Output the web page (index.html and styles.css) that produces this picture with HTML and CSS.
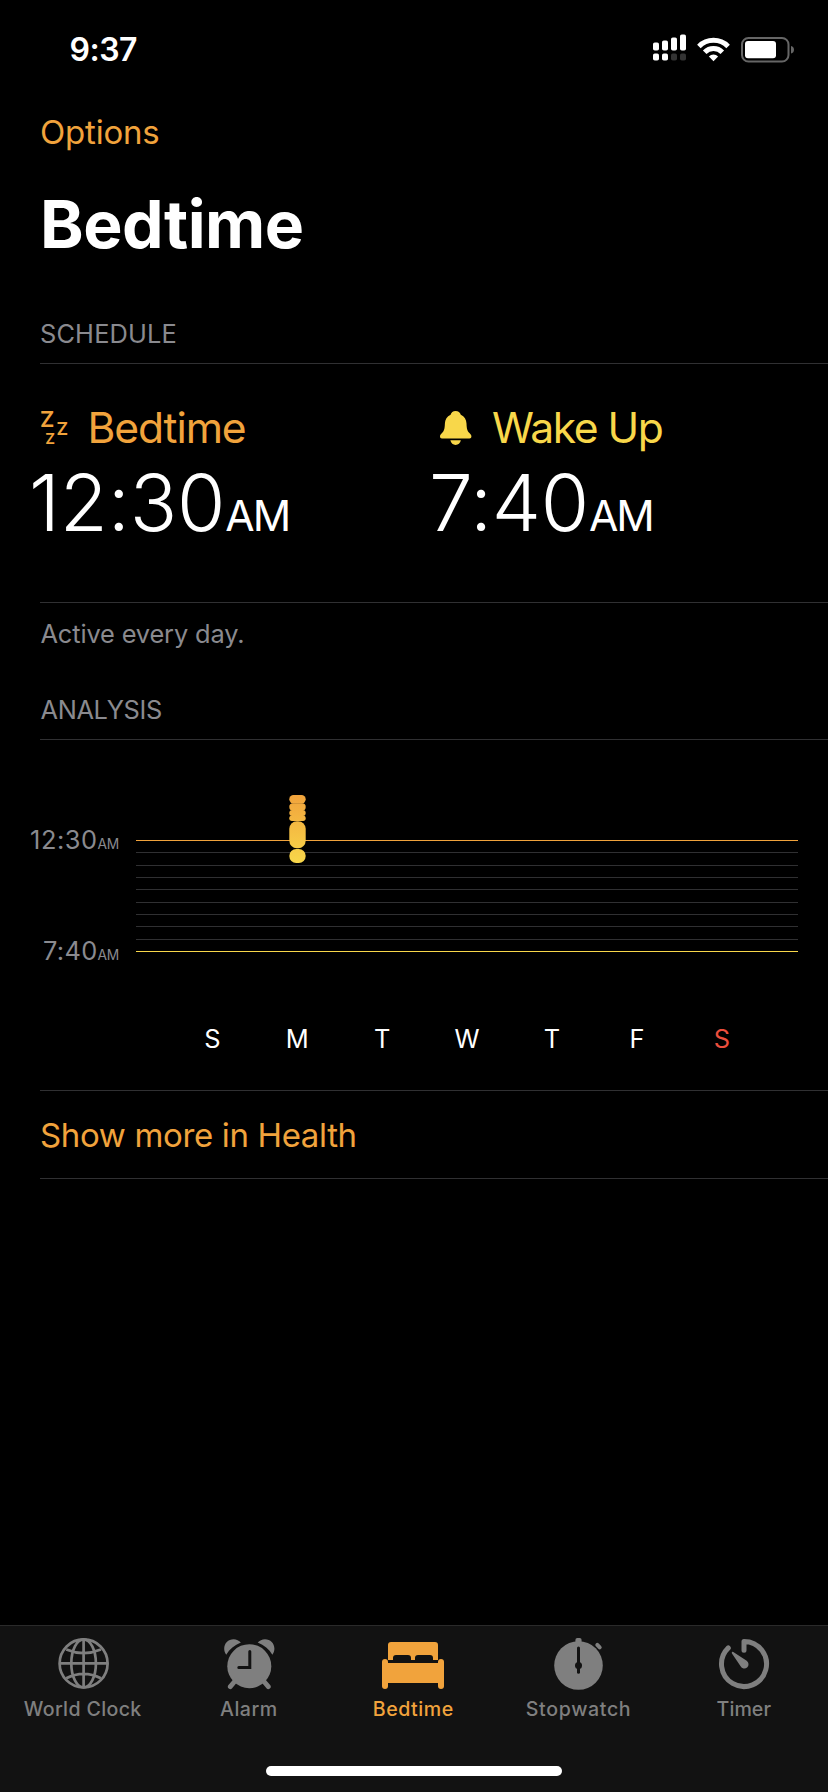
FILE: index.html
```
<!DOCTYPE html>
<html lang="en">
<head>
<meta charset="utf-8">
<title>Bedtime</title>
<link rel="stylesheet" href="styles.css">
</head>
<body>
<header class="status">
  <span class="status-time">9:37</span>
  <span class="status-icons">
    <svg class="signal" width="34" height="27" viewBox="0 0 34 27" fill="#fff">
      <rect x="0" y="8.5" width="6" height="8" rx="1.8"/><rect x="9" y="6.5" width="6" height="10" rx="1.8"/><rect x="18" y="3.5" width="6" height="13" rx="1.8"/><rect x="27" y="0.5" width="6" height="16" rx="1.8"/>
      <rect x="0" y="19.5" width="6" height="7" rx="1.8"/><rect x="9" y="19.5" width="6" height="7" rx="1.8"/>
      <g fill="#333"><rect x="18" y="19.5" width="6" height="7" rx="1.8"/><rect x="27" y="19.5" width="6" height="7" rx="1.8"/></g>
    </svg>
    <svg class="wifi" width="33" height="25" viewBox="0 0 33 25">
      <g fill="none" stroke="#fff" stroke-width="5"><path d="M1.9 9.4A20.6 20.6 0 0 1 31.1 9.4"/><path d="M7.7 15.2A12.4 12.4 0 0 1 25.3 15.2"/></g>
      <path fill="#fff" d="M11.9 19.4A6.6 6.6 0 0 1 21.1 19.4L16.5 24.2Z"/>
    </svg>
    <svg class="battery" width="53" height="26" viewBox="0 0 53 26">
      <rect x="1" y="1" width="46.5" height="23.5" rx="6.5" fill="none" stroke="#666" stroke-width="2"/>
      <rect x="4" y="4" width="31" height="17.2" rx="3" fill="#fff"/>
      <path d="M50 9C52 9.4 53 11 53 12.8S52 16.200 50 16.600Z" fill="#666"/>
    </svg>
  </span>
</header>
<nav class="nav">Options</nav>
<h1 class="title">Bedtime</h1>

<main>
  <h2 class="section section-schedule">SCHEDULE</h2>
  <section class="schedule">
    <div class="slot">
      <div class="slot-label slot-bed">
        <svg class="slot-icon" width="32" height="36" viewBox="0 0 32 36">
          <text class="z" x="-0.900" y="17" font-size="22">Z</text>
          <text class="z" x="15.600" y="25.300" font-size="17.800">Z</text>
          <text class="z" x="4.300" y="34.200" font-size="15">Z</text>
        </svg>
        <span class="slot-name">Bedtime</span>
      </div>
      <div class="slot-time">12:30<span class="ampm">AM</span></div>
    </div>
    <div class="slot">
      <div class="slot-label slot-wake">
        <svg class="slot-icon" width="32" height="36" viewBox="0 0 32 36" fill="#f8d74a">
          <path d="M15.600 1C18.300 1 20.200 2.500 20.800 4.700C24.500 6.300 26.300 9.400 26.500 13.500C26.700 19 27.300 21 29.400 23.100C30.800 24.400 31.400 25.300 31.400 26.600C31.400 27.900 30.700 28.600 29.500 28.600H1.900C.700 28.600 0 27.900 0 26.600C0 25.300.600 24.400 2 23.100C4.100 21 4.700 19 4.900 13.500C5.100 9.400 6.900 6.300 10.600 4.700C11.200 2.500 12.900 1 15.600 1Z"/>
          <path d="M10.300 30.300H20.900C20.100 33.200 18.200 34.900 15.600 34.900S11.100 33.200 10.300 30.300Z"/>
        </svg>
        <span class="slot-name">Wake Up</span>
      </div>
      <div class="slot-time slot-time-wake">7:40<span class="ampm">AM</span></div>
    </div>
    <svg class="chevron" width="14" height="26" viewBox="0 0 14 26"><path d="M2 3L11.700 13L2 23" fill="none" stroke="#48484a" stroke-width="4" stroke-linecap="round" stroke-linejoin="round"/></svg>
  </section>
  <p class="note">Active every day.</p>
  <h2 class="section section-analysis">ANALYSIS</h2>

  <section class="chart">
    <div class="chart-body">
      <div class="axis">
        <div class="axis-label">12:30<span class="axis-ampm">AM</span></div>
        <div class="axis-label axis-wake">7:40<span class="axis-ampm">AM</span></div>
      </div>
      <svg class="plot" width="662" height="180" viewBox="0 0 662 180">
        <defs><linearGradient id="sleep" gradientUnits="userSpaceOnUse" x1="0" y1="15" x2="0" y2="83"><stop offset="0" stop-color="#f1a33c"/><stop offset="1" stop-color="#f8d74a"/></linearGradient></defs>
        <g fill="#303032">
          <rect y="72" width="662" height="1"/><rect y="85" width="662" height="1"/><rect y="97" width="662" height="1"/><rect y="109" width="662" height="1"/><rect y="122" width="662" height="1"/><rect y="134" width="662" height="1"/><rect y="146" width="662" height="1"/><rect y="159" width="662" height="1"/>
        </g>
        <rect y="60" width="662" height="1" fill="#f1a33c"/>
        <rect y="171" width="662" height="1" fill="#f8d74a"/>
        <g fill="url(#sleep)">
          <rect x="153.300" y="15" width="16.400" height="8.500" rx="4.200"/>
          <rect x="153.300" y="23.300" width="16.400" height="7.200" rx="3.500"/>
          <rect x="153.300" y="30" width="16.400" height="6" rx="3"/>
          <rect x="153.300" y="35.500" width="16.400" height="5.500" rx="2.700"/>
          <rect x="153.300" y="41.300" width="16.400" height="27" rx="7.500"/>
          <rect x="153.300" y="69" width="16.400" height="14" rx="6.900"/>
        </g>
      </svg>
    </div>
    <div class="days"><span>S</span><span>M</span><span>T</span><span>W</span><span>T</span><span>F</span><span class="today">S</span></div>
  </section>
  <a class="more">Show more in Health</a>
</main>

<footer class="tabs">
  <div class="tab">
    <svg width="64" height="52" viewBox="0 0 64 52" fill="none" stroke="#7f7f7f" stroke-width="2.700">
      <circle cx="32.600" cy="25.400" r="24"/><ellipse cx="32.600" cy="25.400" rx="12.300" ry="24"/>
      <path d="M32.600 1V50M8.300 25.400H57.300M15.300 11.500C26.300 16.100 38.800 16.100 49.900 11.500M15.300 40.300C26.300 34.700 38.800 34.700 49.900 40.300"/>
    </svg>
    <span class="tab-name ls-world">World Clock</span>
  </div>
  <div class="tab tab-alarm">
    <svg width="64" height="52" viewBox="0 0 64 52">
      <g fill="#7f7f7f"><circle cx="32.300" cy="28.200" r="22"/>
      <path d="M9.200 16.700C7.600 14.600 7.200 12.500 7.200 10.600C7.200 5.200 11.200 1.200 16.600 1.200C19.500 1.200 22 2.500 23.900 4.600C17.500 7 12.500 11.200 9.200 16.700ZM55.400 16.700C57 14.600 57.400 12.500 57.400 10.600C57.400 5.200 53.400 1.200 48 1.200C45.100 1.200 42.600 2.500 40.700 4.600C47.100 7 52.100 11.200 55.400 16.700Z"/></g>
      <path d="M13.300 48.600L19.300 41.500M51.300 48.600L45.300 41.500" stroke="#7f7f7f" stroke-width="4.800" stroke-linecap="round"/>
      <path d="M32.800 13.500V29.500H21.800" fill="none" stroke="#121212" stroke-width="3" stroke-linecap="round"/>
    </svg>
    <span class="tab-name">Alarm</span>
  </div>
  <div class="tab tab-active">
    <svg width="64" height="52" viewBox="0 0 64 52" fill="#f1a33c">
      <path d="M7 22V7Q7 4 10 4H54Q57 4 57 7V22H52V20Q52 17 49 17H37Q34 17 34 20V22H30V20Q30 17 27 17H15Q12 17 12 20V22Z"/>
      <rect x="1" y="21" width="6" height="30" rx="3"/><rect x="57" y="21" width="6" height="30" rx="3"/><rect x="6" y="25" width="52" height="20"/>
    </svg>
    <span class="tab-name">Bedtime</span>
  </div>
  <div class="tab">
    <svg width="64" height="52" viewBox="0 0 64 52">
      <g fill="#7f7f7f"><circle cx="31.500" cy="27.500" r="24.300"/><rect x="28.400" y="0" width="6.200" height="8" rx="2"/></g>
      <path d="M50.300 6.900L52.700 9.300" stroke="#7f7f7f" stroke-width="4" stroke-linecap="round"/>
      <path d="M31.500 10V34.300" stroke="#121212" stroke-width="3" stroke-linecap="round"/><circle cx="31.500" cy="27.400" r="3.500" fill="#121212"/>
    </svg>
    <span class="tab-name ls-stop">Stopwatch</span>
  </div>
  <div class="tab">
    <svg width="64" height="52" viewBox="0 0 64 52">
      <path d="M32 12.300V3.500A22.500 22.500 0 1 1 16.300 9.900" fill="none" stroke="#7f7f7f" stroke-width="5" stroke-linecap="round" stroke-linejoin="round"/>
      <path d="M21.300 14.100L34.700 22.800A4.200 4.200 0 1 1 28.600 28.200L19.800 15.300Q19.600 13.300 21.300 14.100Z" fill="#7f7f7f"/>
    </svg>
    <span class="tab-name ls-timer">Timer</span>
  </div>
  <div class="home"></div>
</footer>
</body>
</html>
```
FILE: styles.css
```
* { box-sizing: border-box; }
body {
  margin: 0;
  width: 828px;
  height: 1792px;
  display: flex;
  flex-direction: column;
  background: #000;
  color: #fff;
  font-family: Inter, "Liberation Sans", sans-serif;
  font-weight: 400;
  overflow: hidden;
}
svg { display: block; flex: none; overflow: visible; }
h1, h2, p { margin: 0; font-weight: 400; }

.status {
  height: 100px;
  display: flex;
  justify-content: space-between;
  padding: 0 34px 0 69.500px;
}
.status-time { font-size: 32px; font-weight: 600; line-height: 100px; letter-spacing: -0.5px; }
.status-icons { display: flex; align-items: flex-start; padding-top: 34px; }
.wifi { margin: 3px 0 0 10px; }
.battery { margin: 3px 0 0 11px; }

.nav {
  height: 64px;
  padding-left: 40px;
  font-size: 33px;
  line-height: 64px;
  letter-spacing: -0.2px;
  color: #f1a33c;
}
.title {
  height: 120px;
  padding-left: 40px;
  font-size: 66px;
  font-weight: 700;
  line-height: 120px;
  letter-spacing: -0.5px;
}

.section {
  margin-left: 40px;
  border-bottom: 1px solid #303032;
  font-size: 25.4px;
  line-height: 32px;
  color: #8a8a8f;
}
.section-schedule { height: 80px; padding-top: 34px; letter-spacing: 0.14px; }
.section-analysis { height: 75px; padding: 29px 0 0 0.500px; letter-spacing: -0.36px; }

.schedule {
  height: 239px;
  margin-left: 40px;
  border-bottom: 1px solid #303032;
  display: flex;
  align-items: center;
}
.slot { width: 400px; height: 238px; padding-top: 36px; flex: none; }
.slot:first-child { margin-left: -11px; }
.slot-label { height: 55px; display: flex; align-items: center; font-size: 42.6px; line-height: 55px; }
.slot-bed { padding-left: 12px; gap: 14.500px; color: #f1a33c; letter-spacing: -1.1px; }
.slot-wake { padding-left: 11px; gap: 20px; color: #f8d74a; letter-spacing: -1.5px; }
.slot-time { font-size: 78.4px; font-weight: 300; line-height: 95px; letter-spacing: -0.15px; }
.slot-time-wake { letter-spacing: -0.3px; }
.ampm { font-size: 42.6px; font-weight: 400; line-height: 1; letter-spacing: -2px; }
.z { fill: #f1a33c; font-family: Inter, sans-serif; font-weight: 600; letter-spacing: 0; }
.chevron { margin: 0 45px 0 auto; }

.note {
  height: 62px;
  padding-left: 40.500px;
  font-size: 25.4px;
  line-height: 62px;
  letter-spacing: -0.15px;
  color: #8a8a8f;
}

.chart {
  height: 351px;
  margin-left: 40px;
  border-bottom: 1px solid #303032;
  padding-top: 40px;
}
.chart-body { display: flex; margin-left: -40px; height: 226px; }
.axis { width: 119px; margin-right: 17px; padding-top: 3.500px; }
.axis-label {
  height: 111px;
  font-size: 25.4px;
  line-height: 111px;
  letter-spacing: 0.55px;
  text-align: right;
  white-space: nowrap;
  color: #8a8a8f;
}
.axis-wake { letter-spacing: 0.36px; }
.axis-ampm { font-size: 13.8px; line-height: 1; letter-spacing: -0.3px; }
.days { display: flex; margin-left: 130px; font-size: 25.4px; line-height: 66px; }
.days span { width: 84.900px; text-align: center; }
.days .today { color: #eb4e3d; }

.more {
  display: block;
  height: 88px;
  margin-left: 40px;
  border-bottom: 1px solid #303032;
  font-size: 33px;
  line-height: 88px;
  letter-spacing: -0.35px;
  color: #f1a33c;
}

.tabs {
  height: 167px;
  margin-top: auto;
  display: flex;
  flex-wrap: wrap;
  align-content: flex-start;
  border-top: 1px solid #2a2a2a;
  background: #121212;
  padding-right: 1px;
}
.tab {
  width: 165.300px;
  height: 140px;
  padding-top: 12px;
  display: flex;
  flex-direction: column;
  align-items: center;
  color: #7f7f7f;
}
.tab-alarm { padding-left: 1.800px; }
.tab-active { color: #f1a33c; }
.tab-name { margin-top: 3px; font-size: 19.6px; font-weight: 500; line-height: 32px; letter-spacing: 0.5px; white-space: nowrap; }
.ls-world { letter-spacing: 0.35px; }
.ls-stop { letter-spacing: 0.64px; }
.ls-timer { letter-spacing: 0.05px; }
.home { width: 296px; height: 10px; margin: 0 auto; border-radius: 5px; background: #fff; }
```
